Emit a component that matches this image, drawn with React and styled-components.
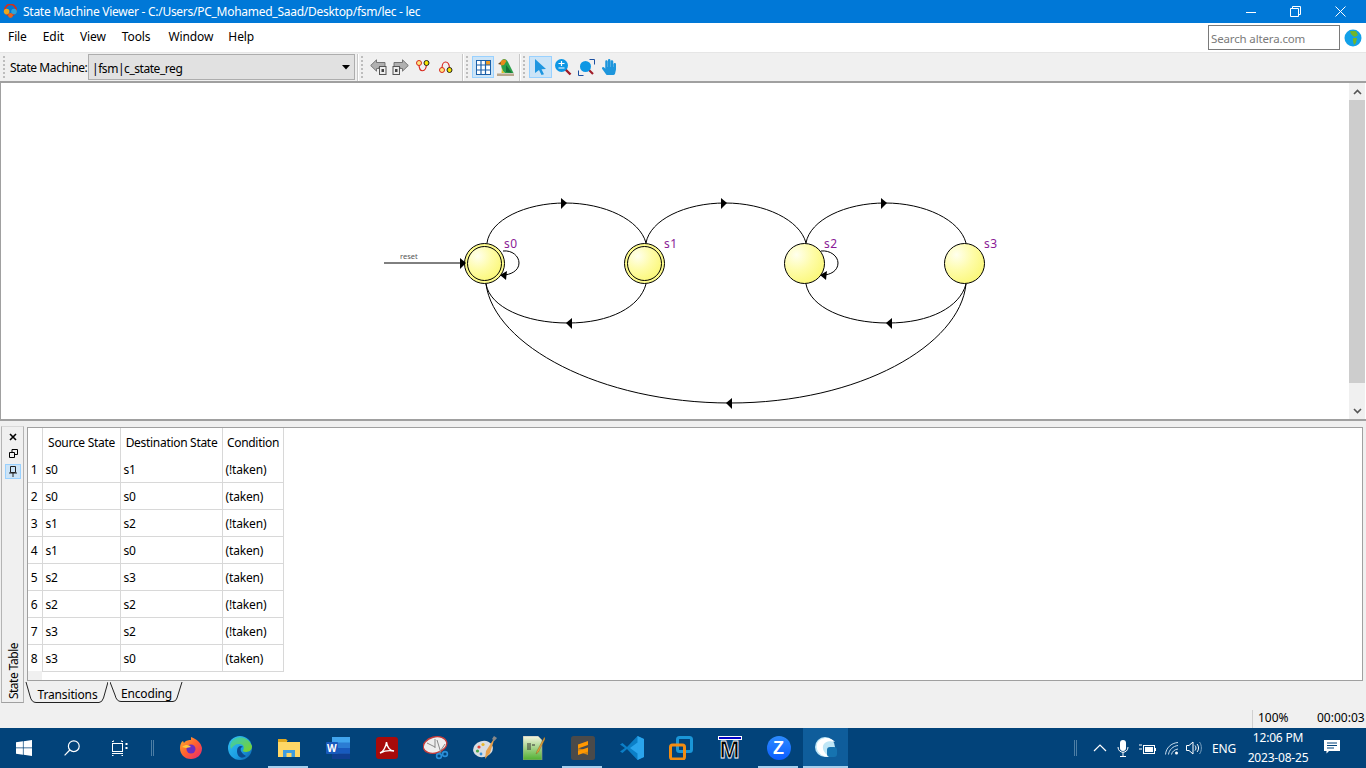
import React from "react";
import styled, { createGlobalStyle } from "styled-components";
import { FaHandPaper } from "react-icons/fa";

const Global = createGlobalStyle`
  html, body { margin: 0; padding: 0; background: #f0f0f0; }
  body { font-family: "Noto Sans", "Open Sans", sans-serif; font-size: 12px; color: #000; }
`;

const Page = styled.div`
  width: 1366px; height: 768px; overflow: hidden;
  display: flex; flex-direction: column; background: #f0f0f0;
`;

/* ---- title bar ---- */
const TitleBar = styled.div`
  height: 23px; flex: none; background: #0078d7; color: #fff;
  display: flex; align-items: center; padding: 0 3px 0 3px;
`;
const TitleText = styled.div`
  margin-left: 5px; font-size: 12px; letter-spacing: -0.27px; white-space: nowrap; flex: 1;
`;
const WinButton = styled.div`
  width: 45px; height: 23px; display: flex; align-items: center; justify-content: center;
`;

/* ---- menu bar ---- */
const MenuBar = styled.div`
  height: 30px; flex: none; background: #fff; display: flex; align-items: center; box-sizing: border-box;
  border-bottom: 1px solid #e6e6e6; padding-bottom: 2px;
`;
const MenuItem = styled.div`
  padding: 0 8px; margin-right: ${(p) => p.$gap || 0}px; font-size: 12px; letter-spacing: -0.1px;
`;
const MenuSpacer = styled.div`flex: 1;`;
const SearchBox = styled.div`
  width: 128px; height: 23px; border: 1px solid #7a7a7a; background: #fff; margin: 2px 4px 0 0;
  color: #7a7a7a; font-size: 11.5px; line-height: 25px; padding-left: 2px;
  letter-spacing: -0.15px;
`;
const GlobeWrap = styled.div`width: 18px; height: 18px; margin: 2px 4px 0 0;`;

/* ---- toolbar ---- */
const ToolBar = styled.div`
  height: 28px; flex: none; display: flex; align-items: center; background: #f0f0f0;
  border-bottom: 2px solid #a0a0a0;
`;
const Grip = styled.div`
  width: 2px; height: 22px; margin: 0 ${(p) => p.$right ?? 5}px 0 ${(p) => p.$left ?? 3}px; flex: none;
  background-image: linear-gradient(#bdbdbd 2px, transparent 2px);
  background-size: 2px 4px;
`;
const ToolSep = styled.div`
  width: 1px; height: 27px; background: #c8c8c8; border-right: 1px solid #fff; flex: none; margin-left: ${(p) => p.$left ?? 0}px;
`;
const ComboLabel = styled.div`
  font-size: 12px; width: 78px; flex: none; white-space: nowrap; letter-spacing: -0.42px; padding-top: 1px;
`;
const Combo = styled.div`
  width: 258px; height: 24px; flex: none; background: #e1e1e1; border: 1px solid #adadad;
  display: flex; align-items: center; justify-content: space-between; padding: 0 4px 0 3px;
  font-size: 12px; letter-spacing: -0.45px;
`;
const ComboValue = styled.span`padding-top: 3px;`;
const ToolBtn = styled.div`
  width: ${(p) => p.$w || 22}px; height: 22px; flex: none; display: flex; align-items: center; justify-content: center;
  box-sizing: border-box;
  background: ${(p) => (p.$on ? "#cce4f7" : "transparent")};
  border: 1px solid ${(p) => (p.$on ? "#99d1ff" : "transparent")};
`;

/* ---- diagram ---- */
const DiagramPanel = styled.div`
  height: 338px; flex: none; display: flex; background: #fff; border-bottom: 2px solid #a0a0a0; box-sizing: border-box;
  border-left: 1px solid #a0a0a0;
`;
const Canvas = styled.div`flex: 1; min-width: 0;`;
const ScrollBar = styled.div`
  width: 16px; flex: none; background: #f0f0f0; margin-right: 1px; display: flex; flex-direction: column;
`;
const ScrollArrow = styled.div`
  height: 17px; display: flex; align-items: center; justify-content: center; flex: none;
`;
const ScrollThumb = styled.div`height: 283px; background: #cdcdcd; flex: none;`;
const ScrollTrack = styled.div`flex: 1;`;

/* ---- bottom panel ---- */
const Bottom = styled.div`
  height: 283px; flex: none; display: flex; padding: 5px 3px 0 0; box-sizing: border-box;
`;
const SideStrip = styled.div`
  width: 23px; margin-left: 1px; height: 277px; flex: none; box-sizing: border-box;
  border: 1px solid #b4b4b4; border-bottom-color: #a0a0a0; border-top-color: #d8d8d8;
  display: flex; flex-direction: column; align-items: center; padding: 2px 0 0 1px;
`;
const SideBtn = styled.div`
  width: 16px; height: 15px; margin: ${(p) => (p.$on ? 1 : 0)}px 0 2px; display: flex; align-items: center; justify-content: center; box-sizing: border-box;
  background: ${(p) => (p.$on ? "#cce4f7" : "transparent")};
  border: 1px solid ${(p) => (p.$on ? "#99d1ff" : "transparent")};
`;
const SideLabel = styled.div`
  margin: auto 0 3px 1px; writing-mode: vertical-rl; transform: rotate(180deg); font-size: 12px; letter-spacing: -0.5px;
  line-height: 16px;
`;
const TablePane = styled.div`
  flex: 1; margin-left: 3px; display: flex; flex-direction: column; min-width: 0;
`;
const TableFrame = styled.div`
  height: 254px; flex: none; box-sizing: border-box; background: #fff;
  border: 1px solid #a0a0a0;
  display: flex; position: relative; margin-top: 1px;
`;
const Table = styled.table`
  border-collapse: collapse; table-layout: fixed; width: 255px; height: 243px; font-size: 12px;
`;
const HeadCell = styled.th`
  font-weight: 400; height: 27px; padding: 2px 0 0 1px; text-align: center; white-space: nowrap;
  border-right: 1px solid #d8d8d8; letter-spacing: -0.3px; box-sizing: border-box;
`;
const NumCell = styled.td`
  padding: 2px 4px 0 0; text-align: right; height: 27px; border-bottom: 1px solid #d8d8d8; border-right: 1px solid #d8d8d8; box-sizing: border-box;
`;
const Cell = styled.td`
  padding: 2px 0 0 3px; height: 27px; border-bottom: 1px solid #d8d8d8; border-right: 1px solid #d8d8d8; box-sizing: border-box;
  letter-spacing: -0.15px;
`;
const Corner = styled.div`
  position: absolute; left: 0; bottom: 0; width: 14px; height: 9px; background: #f0f0f0;
`;
const Tabs = styled.div`display: flex; height: 22px; margin-left: -2px; flex: none;`;
const Tab = styled.div`
  position: relative; width: ${(p) => p.$w}px; height: 22px; margin-left: ${(p) => p.$ml || 0}px;
  font-size: 12px; letter-spacing: -0.15px; display: flex; justify-content: center; padding: ${(p) => p.$pt}px 0 0 ${(p) => p.$pl || 0}px; box-sizing: border-box;
`;
const TabOutline = styled.svg`position: absolute; left: 0; top: 0;`;
const TabText = styled.span`position: relative; line-height: 16px;`;

/* ---- status ---- */
const StatusBar = styled.div`
  height: 24px; flex: none; display: flex; align-items: flex-end; justify-content: flex-end; font-size: 12px;
  padding-bottom: 2px; box-sizing: border-box;
`;
const StatusDivider = styled.div`width: 1px; height: 18px; background: #d0d0d0; margin-right: 5px; margin-bottom: -2px;`;
const StatusCell = styled.div`width: ${(p) => p.$w}px; white-space: nowrap; line-height: 16px;`;

/* ---- task bar ---- */
const TaskBar = styled.div`
  height: 40px; flex: none; background: #02437a; display: flex; align-items: stretch; color: #fff; padding-right: 17px;
`;
const TaskCell = styled.div`
  width: ${(p) => p.$w || 49}px; flex: none; display: flex; align-items: center; justify-content: center; position: relative;
  background: ${(p) => (p.$active ? "#0f5d9b" : "transparent")};
  margin-left: ${(p) => p.$ml || 0}px;
  &::after {
    content: ""; position: absolute; bottom: 0; left: ${(p) => (p.$active ? 0 : 4)}px; right: ${(p) => (p.$active ? 0 : 5)}px; height: 2px;
    background: ${(p) => (p.$running || p.$active ? "#a4cfee" : "transparent")};
  }
`;
const TaskDivider = styled.div`
  width: 3px; height: 16px; margin: 12px 0 0 ${(p) => p.$ml}px; flex: none;
  border-left: 1px solid #4d7ea5; border-right: 1px solid #4d7ea5; box-sizing: border-box;
`;
const TraySpacer = styled.div`flex: 1;`;
const TrayIcon = styled.div`
  width: ${(p) => p.$w || 24}px; margin-left: ${(p) => p.$ml || 0}px; flex: none; display: flex; align-items: center; justify-content: center;
`;
const TrayText = styled.div`
  width: ${(p) => p.$w}px; margin-left: 3px; flex: none; display: flex; align-items: center; justify-content: center; font-size: 12px; letter-spacing: -0.1px;
`;
const Clock = styled.div`
  width: 74px; flex: none; display: flex; flex-direction: column; align-items: center; justify-content: center;
  font-size: 12px; line-height: 20px; letter-spacing: -0.2px;
`;

/* ---- drawings ---- */
const Arrow = ({ d }) => <path d={d} fill="#000" stroke="none" />;

const StateCircle = ({ cx, double }) => (
  <g>
    <circle cx={cx} cy="263.5" r="20" fill={double ? "#fdfb8e" : "url(#st)"} stroke="#000" />
    {double && <circle cx={cx} cy="263.5" r="17" fill="url(#st)" stroke="#000" />}
  </g>
);

const Label = styled.text`
  font-family: "Noto Sans", sans-serif; font-size: 12px; letter-spacing: 0.4px; fill: #8a1a96;
`;
const ResetText = styled.text`
  font-family: "Noto Sans", sans-serif; font-size: 7.5px; fill: #555;
`;

const Diagram = () => (
  <svg width="1348" height="336" viewBox="1 83 1348 336" style={{ display: "block" }}>
    <defs>
      <radialGradient id="st" cx="30%" cy="28%" r="75%">
        <stop offset="0%" stopColor="#ffffee" />
        <stop offset="55%" stopColor="#fefca8" />
        <stop offset="100%" stopColor="#fbf87e" />
      </radialGradient>
    </defs>
    <g fill="none" stroke="#000" strokeWidth="1">
      <path d="M487 243 C490 220 525 203 565 203 C605 203 640 220 646 243" />
      <path d="M646 243 C650 220 685 203 725 203 C765 203 800 220 806 243" />
      <path d="M806 243 C810 220 845 203 885 203 C925 203 960 220 966 243" />
      <path d="M486 284 C490 307 525 323 568 323 C610 323 640 307 646 284" />
      <path d="M806 284 C810 307 845 323 888 323 C930 323 960 307 966 284" />
      <path d="M966 284 C960 345 860 403 730 403 C600 403 494 345 486 284" />
      <path d="M503 251 C512 250 519 256 519 263 C519 271 510 275 503 275" />
      <path d="M821 251 C830 250 838 256 838 263 C838 271 830 275 823 275" />
      <path d="M384 263 L462 263" />
    </g>
    <StateCircle cx={484.5} double />
    <StateCircle cx={644.5} double />
    <StateCircle cx={804.5} />
    <StateCircle cx={964.5} />
    <Arrow d="M561 198 L567 203 L561 209 Z" />
    <Arrow d="M721 198 L727 203 L721 209 Z" />
    <Arrow d="M881 198 L887 203 L881 209 Z" />
    <Arrow d="M572 318 L566 323 L572 329 Z" />
    <Arrow d="M892 318 L886 323 L892 329 Z" />
    <Arrow d="M732 398 L726 403 L732 409 Z" />
    <Arrow d="M460 258 L466 263 L460 269 Z" />
    <Arrow d="M507 271 L500 275 L506 280 Z" />
    <Arrow d="M827 271 L820 275 L826 280 Z" />
    <ResetText x="400" y="259">reset</ResetText>
    <Label x="504" y="248">s0</Label>
    <Label x="664" y="248">s1</Label>
    <Label x="824" y="248">s2</Label>
    <Label x="984" y="248">s3</Label>
  </svg>
);

const AppLogo = () => (
  <svg width="15" height="15" viewBox="0 0 15 15">
    <circle cx="7.5" cy="6" r="5.6" fill="none" stroke="#d0301c" strokeWidth="1.8" />
    <circle cx="3.6" cy="7.6" r="2.8" fill="#eca61c" />
    <circle cx="11" cy="7.6" r="2.8" fill="#2aa5dc" />
    <circle cx="7.5" cy="11.5" r="2.4" fill="#e8641c" />
  </svg>
);
const Minimize = () => <svg width="10" height="10"><path d="M0 5.5H10" stroke="#fff" /></svg>;
const Restore = () => (
  <svg width="11" height="11" fill="none" stroke="#fff">
    <path d="M.5 2.5h8v8h-8z" /><path d="M2.5 2.5v-2h8v8h-2" />
  </svg>
);
const Close = () => <svg width="11" height="11" stroke="#fff"><path d="M.5.5l10 10M10.5.5l-10 10" /></svg>;
const Globe = () => (
  <svg width="18" height="18" viewBox="0 0 18 18">
    <circle cx="9" cy="9" r="8.5" fill="#12a0e8" />
    <path d="M6 2 L12 2 L14 6 L11 8 L9 7 L7 5 Z M9 9 L13 9 L12 14 L10 16 L9 12 Z" fill="#6fb52c" />
  </svg>
);
const ComboArrow = () => <svg width="8" height="5"><path d="M0 0H8L4 4.5Z" fill="#000" /></svg>;
const NavIcon = ({ flip }) => (
  <svg width="17" height="16" viewBox="0 0 17 16" style={flip ? { transform: "scaleX(-1)" } : undefined}>
    <path d="M6.5 .8 L.7 6.5 L6.5 12.2 V9.5 H9 V8 H15 V3.5 H6.5Z" fill="#b0b0b0" stroke="#6a6a6a" strokeWidth=".9" />
    <rect x="9.5" y="7.5" width="6.5" height="8" fill="#eee" stroke="#555" />
    <rect x="11.5" y="10" width="2.5" height="3" fill="#444" />
  </svg>
);
const TransIcon = ({ up }) => (
  <svg width="16" height="16" viewBox="0 0 16 16">
    <path d={up ? "M4 9 C4 1 11 1 11.5 9" : "M4 5 C4 14 11 14 11.5 5"} fill="none" stroke="#d8261c" strokeWidth="1.2" />
    <circle cx="4" cy={up ? 11 : 4} r="2.5" fill="#ffe680" stroke="#d8261c" />
    <circle cx="11.5" cy={up ? 11 : 4} r="2.5" fill="#f5e400" stroke="#222" />
  </svg>
);
const GridIcon = () => (
  <svg width="15" height="15" viewBox="0 0 15 15">
    <rect x=".5" y=".5" width="14" height="14" fill="#fff" stroke="#1b5fa8" />
    <rect x="9" y="1" width="5" height="4" fill="#f39a1e" />
    <path d="M.5 5h14M.5 10h14M5 .5v14M9.5 .5v14" stroke="#1b5fa8" strokeWidth="1.2" />
  </svg>
);
const BirdIcon = () => (
  <svg width="17" height="19" viewBox="0 0 17 19" style={{ flex: "none" }}>
    <path d="M0 15.5 H17 V18 H0 Z" fill="#b8a68c" />
    <path d="M4 4 C5 0 9 0 11 4 L16.5 15 L8 15 C5 13 4 9 4 4Z" fill="#2aa04a" />
    <path d="M4 3.5 L1 6 L4 6.8 Z" fill="#6b4a20" />
    <path d="M3.5 4 C5 1 8 0.5 9.5 3 L7 7 L4 7.5Z" fill="#e88a1c" />
    <path d="M9 7 L15 15 L9 14Z" fill="#156e38" />
    <path d="M5 9 C5 12 7 15 8 15 L4.5 15Z" fill="#d8c020" />
  </svg>
);
const CursorIcon = () => (
  <svg width="13" height="16" viewBox="0 0 13 16"><path d="M1 0 L12 10 L7.5 10.2 L10 15.2 L7.5 16 L5 11 L1 14 Z" fill="#1e96e0" /></svg>
);
const ZoomIcon = () => (
  <svg width="17" height="17" viewBox="0 0 17 17">
    <path d="M10 10 L15.5 15.5" stroke="#a01c28" strokeWidth="2.4" />
    <circle cx="6.5" cy="6.5" r="6.5" fill="#0d97e4" />
    <path d="M3.5 4.5h6M6.5 2v5M3.5 9h6" stroke="#fff" strokeWidth="1.2" />
  </svg>
);
const FitIcon = () => (
  <svg width="17" height="17" viewBox="0 0 17 17">
    <path d="M11.5 .5h5v5M.5 11.5v5h5" fill="none" stroke="#1b4fa0" />
    <path d="M11 11 L15 15" stroke="#a01c28" strokeWidth="2.2" />
    <circle cx="7.5" cy="7.5" r="5.5" fill="#0d97e4" />
  </svg>
);

const WinLogo = () => (
  <svg width="16" height="16" viewBox="0 0 16 16" fill="#fff">
    <path d="M0 2.3 L6.9 1.3 V7.6 H0Z M7.6 1.2 L16 0 V7.6 H7.6Z M0 8.3 H6.9 V14.7 L0 13.7Z M7.6 8.3 H16 V16 L7.6 14.8Z" />
  </svg>
);
const SearchIcon = () => (
  <svg width="16" height="16" viewBox="0 0 16 16" fill="none" stroke="#fff" strokeWidth="1.2">
    <circle cx="9.8" cy="6.2" r="5.4" /><path d="M5.8 10 L.6 15.4" />
  </svg>
);
const TaskView = () => (
  <svg width="16" height="16" viewBox="0 0 16 16" fill="none" stroke="#fff" strokeWidth="1">
    <rect x=".5" y="3.5" width="10" height="8" />
    <path d="M0 1.5h1.5M9.5 1.5h1.5M9.5 .5v1M1.5 .5v1M0 13.5h11M0 15.5h1.5M9.5 15.5h1.5" />
    <path d="M14.5 3v2M14.5 7v2" strokeWidth="2" />
  </svg>
);
const Firefox = () => (
  <svg width="24" height="24" viewBox="0 0 24 24">
    <defs><linearGradient id="ff" x1="0" y1="0" x2="1" y2="1"><stop offset="0" stopColor="#ffb52c" /><stop offset=".5" stopColor="#ff6030" /><stop offset="1" stopColor="#e3247a" /></linearGradient></defs>
    <path d="M12 1 C17 3 22 6 23 12 C23 19 18 23 12 23 C5 23 1 18 1 12 C1 9 2 6 4 5 L5 7 C7 4 10 4 12 4 C12 3 12 2 12 1Z" fill="url(#ff)" />
    <circle cx="12" cy="13" r="4.5" fill="#6b2fc0" />
    <path d="M3 11 C7 8 10 9 12 11 L7 12Z" fill="#ffc83c" />
  </svg>
);
const Edge = () => (
  <svg width="24" height="24" viewBox="0 0 24 24">
    <defs><linearGradient id="ed" x1="0" y1="0" x2="1" y2="1"><stop offset="0" stopColor="#35c1f1" /><stop offset=".6" stopColor="#1b9de2" /><stop offset="1" stopColor="#0c59a4" /></linearGradient>
    <linearGradient id="ed2" x1="0" y1="0" x2="1" y2="1"><stop offset="0" stopColor="#34c9c4" /><stop offset="1" stopColor="#7ed321" /></linearGradient></defs>
    <circle cx="12" cy="12" r="12" fill="url(#ed)" />
    <path d="M4 5 C9 -1 20 0 24 10 C24 16 18 17 14.5 15 C17 12 16 8 11 8 C7 8 5 10 3 13 C2 10 2 8 4 5Z" fill="url(#ed2)" />
    <path d="M9 15 C9 10 13 9 15 11 C11 11 12 17 18 20 C13 24 9 20 9 15Z" fill="#0b4a8e" />
  </svg>
);
const Folder = () => (
  <svg width="22" height="18" viewBox="0 0 22 18">
    <path d="M0 0 H8 L10 2 H9 V4 H0Z" fill="#e0a820" />
    <rect x="0" y="3" width="22" height="15" fill="#ffd766" />
    <path d="M5 18 V11 H17 V18 H13.5 V14 H8.5 V18Z" fill="#3e9de0" />
  </svg>
);
const WordText = styled.text`font-family: "Noto Sans", sans-serif; font-weight: 700; font-size: 10px; fill: #fff;`;
const Word = () => (
  <svg width="24" height="22" viewBox="0 0 24 22">
    <rect x="6" y="0" width="18" height="22" fill="#2b7cd3" />
    <rect x="6" y="0" width="18" height="5.5" fill="#41a5ee" />
    <rect x="6" y="11" width="18" height="5.5" fill="#185abd" />
    <rect x="6" y="16.5" width="18" height="5.5" fill="#103f91" />
    <rect x="0" y="5" width="12" height="12" rx="1" fill="#185abd" />
    <WordText x="1" y="15">W</WordText>
  </svg>
);
const Acrobat = () => (
  <svg width="22" height="22" viewBox="0 0 22 22">
    <rect width="22" height="22" rx="3" fill="#a80a0a" />
    <path d="M4 16 C7 15 10 10 10.5 5 C11 10 14 14 18 14 C13 13 8 14 4 16Z" fill="none" stroke="#fff" strokeWidth="1.4" />
  </svg>
);
const Snip = () => (
  <svg width="26" height="24" viewBox="0 0 26 24">
    <ellipse cx="12" cy="9" rx="12" ry="8" fill="#eee" stroke="#c23a3a" strokeWidth="1.4" transform="rotate(-15 12 9)" />
    <path d="M12 3 L12 12 M4 7 L12 11" stroke="#888" />
    <path d="M14 4 L18 17 M22 8 L16 17" stroke="#888" />
    <circle cx="16" cy="20" r="2.4" fill="none" stroke="#2a8fd8" strokeWidth="1.6" />
    <circle cx="22" cy="18" r="2.4" fill="none" stroke="#2a8fd8" strokeWidth="1.6" />
  </svg>
);
const Palette = () => (
  <svg width="24" height="24" viewBox="0 0 24 24">
    <ellipse cx="10" cy="13" rx="10" ry="8" fill="#d9dde2" transform="rotate(-15 10 13)" />
    <circle cx="6" cy="11" r="1.6" fill="#e0443a" /><circle cx="10" cy="8.5" r="1.6" fill="#e8b82a" />
    <circle cx="4.5" cy="15" r="1.6" fill="#4aa84a" /><circle cx="8" cy="18" r="1.4" fill="#3a8fd8" />
    <path d="M22 1 L13 15 L12 23 L17 17 Z" fill="#e8a04a" /><path d="M21 0 L24 2 L21.5 5 L19 3Z" fill="#888" />
  </svg>
);
const Notepad = () => (
  <svg width="22" height="24" viewBox="0 0 22 24">
    <defs><linearGradient id="np" x1="0" y1="0" x2="0" y2="1"><stop offset="0" stopColor="#f5f5e0" /><stop offset="1" stopColor="#50b030" /></linearGradient></defs>
    <path d="M0 0 H15 L19 4 V24 H0Z" fill="url(#np)" stroke="#999" strokeWidth=".6" />
    <path d="M5 7 V14 M7 7 V14 M9 9 H12" stroke="#333" />
    <path d="M21.5 1 L14 15 L13 18 L15.5 16 L22 3Z" fill="#e8a03a" stroke="#7a5a20" strokeWidth=".4" />
  </svg>
);
const Sublime = () => (
  <svg width="24" height="24" viewBox="0 0 24 24">
    <rect width="24" height="24" rx="2.5" fill="#4a4a4a" />
    <path d="M17 5 V9 L7 12.5 V8.5Z" fill="#ff9800" /><path d="M7 12 L17 15 V19 L7 15.5Z" fill="#ff9800" opacity=".75" /><path d="M17 11.5 V15.5 L7 19 V15Z" fill="#ff9800" />
  </svg>
);
const VSCode = () => (
  <svg width="24" height="24" viewBox="0 0 24 24">
    <path d="M17.5 0 L24 3 V21 L17.5 24 L7 13 L2.5 17 L0 15.5 L5 12 L0 8.5 L2.5 7 L7 11Z" fill="#0b7fc7" />
    <path d="M17.5 0 L24 3 V21 L17.5 24 V6.5 L10 12 L17.5 17.5Z" fill="#2aa5ed" />
  </svg>
);
const VMware = () => (
  <svg width="24" height="24" viewBox="0 0 24 24" fill="none">
    <rect x="8.5" y="1.5" width="14" height="14" rx="2" stroke="#1a96d8" strokeWidth="3" />
    <rect x="1.5" y="9" width="14" height="14" rx="2" stroke="#f28c12" strokeWidth="3" />
  </svg>
);
const MBar = styled.div`
  width: 24px; height: 24px; display: flex; flex-direction: column; align-items: center;
`;
const MTop = styled.div`width: 24px; height: 5px; background: #0000c8; border: 1px solid #fff; box-sizing: border-box;`;
const MLetter = styled.div`
  font-family: "Liberation Sans", sans-serif; font-weight: 700; font-size: 24px; line-height: 20px; color: #000;
  -webkit-text-stroke: 0.8px #fff;
`;
const ZoomBadge = styled.div`
  width: 24px; height: 24px; border-radius: 50%; background: linear-gradient(#2d8cff, #0b5cff); color: #fff;
  font-family: "Liberation Sans", sans-serif; font-weight: 700; font-size: 18px; display: flex; align-items: center; justify-content: center;
`;
const Swirl = () => (
  <svg width="22" height="24" viewBox="0 0 22 24">
    <circle cx="10" cy="11" r="10" fill="#bfe6f6" />
    <path d="M2 8 C5 1 15 0 20 6 C14 4 9 6 8 10 C7 14 11 19 15 21 C8 22 0 16 2 8Z" fill="#fff" />
    <rect x="12" y="11" width="10" height="10" rx="3" fill="#1673b0" />
  </svg>
);

const rows = [
  ["s0", "s1", "(!taken)"], ["s0", "s0", "(taken)"], ["s1", "s2", "(!taken)"], ["s1", "s0", "(taken)"],
  ["s2", "s3", "(taken)"], ["s2", "s2", "(!taken)"], ["s3", "s2", "(!taken)"], ["s3", "s0", "(taken)"],
];
const menuItems = [["File"], ["Edit"], ["View"], ["Tools", 2], ["Window", -1], ["Help"]];

export default function App() {
  return (
    <Page>
      <Global />
      <TitleBar>
        <AppLogo />
        <TitleText>State Machine Viewer - C:/Users/PC_Mohamed_Saad/Desktop/fsm/lec - lec</TitleText>
        <WinButton><Minimize /></WinButton>
        <WinButton><Restore /></WinButton>
        <WinButton><Close /></WinButton>
      </TitleBar>
      <MenuBar>
        {menuItems.map(([m, g]) => <MenuItem key={m} $gap={g}>{m}</MenuItem>)}
        <MenuSpacer />
        <SearchBox>Search altera.com</SearchBox>
        <GlobeWrap><Globe /></GlobeWrap>
      </MenuBar>
      <ToolBar>
        <Grip />
        <ComboLabel>State Machine:</ComboLabel>
        <Combo><ComboValue>|fsm|c_state_reg</ComboValue><ComboArrow /></Combo>
        <ToolSep $left={2} />
        <Grip $left={2} $right={5} />
        <ToolBtn $w={21}><NavIcon /></ToolBtn>
        <ToolBtn $w={22}><NavIcon flip /></ToolBtn>
        <ToolBtn $w={24}><TransIcon /></ToolBtn>
        <ToolBtn $w={22}><TransIcon up /></ToolBtn>
        <ToolSep $left={5} />
        <Grip $left={2} $right={4} />
        <ToolBtn $w={22} $on><GridIcon /></ToolBtn>
        <ToolBtn $w={22}><BirdIcon /></ToolBtn>
        <ToolSep $left={3} />
        <Grip $left={2} $right={4} />
        <ToolBtn $w={23} $on><CursorIcon /></ToolBtn>
        <ToolBtn $w={22}><ZoomIcon /></ToolBtn>
        <ToolBtn $w={24}><FitIcon /></ToolBtn>
        <ToolBtn $w={22}><FaHandPaper size={16} color="#1e96dc" /></ToolBtn>
      </ToolBar>
      <DiagramPanel>
        <Canvas><Diagram /></Canvas>
        <ScrollBar>
          <ScrollArrow><svg width="9" height="6"><path d="M1 5L4.5 1.5 8 5" fill="none" stroke="#555" strokeWidth="1.6" /></svg></ScrollArrow>
          <ScrollThumb />
          <ScrollTrack />
          <ScrollArrow><svg width="9" height="6"><path d="M1 1L4.5 4.5 8 1" fill="none" stroke="#555" strokeWidth="1.6" /></svg></ScrollArrow>
        </ScrollBar>
      </DiagramPanel>
      <Bottom>
        <SideStrip>
          <SideBtn><svg width="8" height="8"><path d="M1 1l6 6M7 1l-6 6" stroke="#000" strokeWidth="1.6" /></svg></SideBtn>
          <SideBtn><svg width="9" height="9" fill="none" stroke="#000"><path d="M.5 3.5h5v5h-5z" /><path d="M3 3V.5h5.5v5H6" /></svg></SideBtn>
          <SideBtn $on><svg width="8" height="11" fill="none" stroke="#222"><path d="M1.5.5h5v6h-5zM0 7h8M4 7v4" /></svg></SideBtn>
          <SideLabel>State Table</SideLabel>
        </SideStrip>
        <TablePane>
          <TableFrame>
            <Table>
              <colgroup>
                <col style={{ width: 14 }} /><col style={{ width: 78 }} /><col style={{ width: 102 }} /><col style={{ width: 61 }} />
              </colgroup>
              <thead>
                <tr>
                  <HeadCell /><HeadCell>Source State</HeadCell><HeadCell>Destination State</HeadCell><HeadCell>Condition</HeadCell>
                </tr>
              </thead>
              <tbody>
                {rows.map((r, i) => (
                  <tr key={i}>
                    <NumCell>{i + 1}</NumCell>
                    {r.map((c, j) => <Cell key={j}>{c}</Cell>)}
                  </tr>
                ))}
              </tbody>
            </Table>
            <Corner />
          </TableFrame>
          <Tabs>
            <Tab $w={83} $pt={6} $pl={2}>
              <TabOutline width="83" height="22" fill="none" stroke="#222"><path d="M1 1 L5 15 Q6.5 21.5 11 21.5 L74 21.5 Q77 21.5 78.5 17 L83 1" /></TabOutline>
              <TabText>Transitions</TabText>
            </Tab>
            <Tab $w={73} $ml={2} $pt={5}>
              <TabOutline width="73" height="22" fill="none" stroke="#222"><path d="M0 1 L5 14 Q6.5 20.5 11 20.5 L63 20.5 Q66 20.5 67 17 L72 1" /></TabOutline>
              <TabText>Encoding</TabText>
            </Tab>
          </Tabs>
        </TablePane>
      </Bottom>
      <StatusBar>
        <StatusDivider />
        <StatusCell $w={59}>100%</StatusCell>
        <StatusCell $w={49}>00:00:03</StatusCell>
      </StatusBar>
      <TaskBar>
        <TaskCell $w={48}><WinLogo /></TaskCell>
        <TaskCell $w={48}><SearchIcon /></TaskCell>
        <TaskCell $w={48}><TaskView /></TaskCell>
        <TaskDivider $ml={7} />
        <TaskCell $ml={12}><Firefox /></TaskCell>
        <TaskCell><Edge /></TaskCell>
        <TaskCell $running><Folder /></TaskCell>
        <TaskCell><Word /></TaskCell>
        <TaskCell><Acrobat /></TaskCell>
        <TaskCell><Snip /></TaskCell>
        <TaskCell><Palette /></TaskCell>
        <TaskCell><Notepad /></TaskCell>
        <TaskCell $running><Sublime /></TaskCell>
        <TaskCell><VSCode /></TaskCell>
        <TaskCell><VMware /></TaskCell>
        <TaskCell><MBar><MTop /><MLetter>M</MLetter></MBar></TaskCell>
        <TaskCell $running><ZoomBadge>Z</ZoomBadge></TaskCell>
        <TaskCell $active $w={45}><Swirl /></TaskCell>
        <TraySpacer />
        <TaskDivider $ml={0} />
        <TrayIcon $w={21} $ml={12}><svg width="14" height="8" fill="none" stroke="#fff" strokeWidth="1.2"><path d="M1 7l6-6 6 6" /></svg></TrayIcon>
        <TrayIcon $w={25}><svg width="12" height="17" viewBox="0 0 12 17" fill="#fff"><rect x="3" width="6" height="11" rx="3" /><path d="M1 7c0 7 10 7 10 0M6 12v4M3 16.5h6" fill="none" stroke="#fff" /></svg></TrayIcon>
        <TrayIcon $w={25}><svg width="17" height="11" viewBox="0 0 17 11"><rect x="4.5" y="2.5" width="11" height="8" fill="none" stroke="#fff" /><rect x="6" y="4" width="8" height="5" fill="#fff" /><path d="M0 2h3M0 6h3" stroke="#fff" /><rect x="16" y="5" width="1" height="3" fill="#fff" /></svg></TrayIcon>
        <TrayIcon $w={24}><svg width="14" height="13" viewBox="0 0 14 13" fill="none" stroke="#c8dcec"><path d="M.5 12.5C1 6 6 1 13 .5M3.5 12.5C4 8 8 4 13 3.5M6.5 12.5C7 10 9 7.5 13 7" /><circle cx="11.5" cy="11" r="1.5" fill="#fff" stroke="none" /></svg></TrayIcon>
        <TrayIcon $w={20}><svg width="16" height="14" viewBox="0 0 16 14" fill="none" stroke="#fff"><path d="M.5 4.5h2.5l4-3.5v12l-4-3.5H.5z" /><path d="M9 4.5c1.3 1.5 1.3 3.5 0 5M11 3c2 2.2 2 5.8 0 8" /><path d="M13.5 1c2.5 3.2 2.5 8.8 0 12" stroke="#7aa0bf" /></svg></TrayIcon>
        <TrayText $w={34}>ENG</TrayText>
        <Clock><span>12:06 PM</span><span>2023-08-25</span></Clock>
        <TrayIcon $w={34}><svg width="17" height="16" viewBox="0 0 17 16"><path d="M0 0H16V11H5L2.5 13.5V11H0Z" fill="#fff" /><path d="M3 3h10M3 5.5h10M3 8h7" stroke="#02437a" /></svg></TrayIcon>
      </TaskBar>
    </Page>
  );
}
